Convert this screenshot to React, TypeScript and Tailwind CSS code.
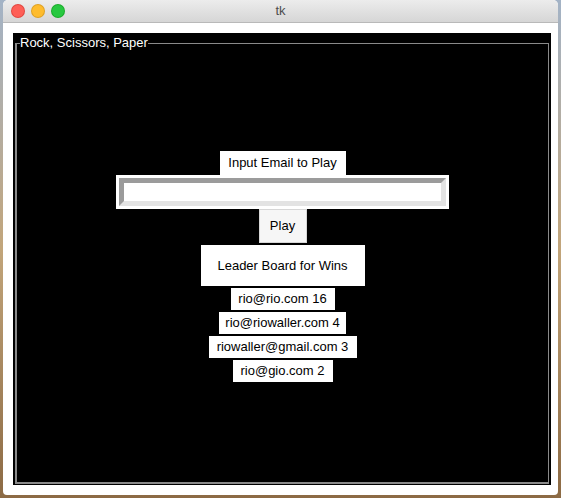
import React from "react";

const leaders = [
  { email: "rio@rio.com", wins: 16, w: "w-[104px]" },
  { email: "rio@riowaller.com", wins: 4, w: "w-[127px]" },
  { email: "riowaller@gmail.com", wins: 3, w: "w-[148px]" },
  { email: "rio@gio.com", wins: 2, w: "w-[100px]" },
];

function TitleBar() {
  return (
    <div className="grid h-[23px] grid-cols-[1fr_auto_1fr] items-center border-b border-[#b9b9b9] bg-gradient-to-b from-[#ececec] to-[#d6d6d6]">
      <div className="flex items-center gap-[8px] pl-[9px]">
        <span className="h-[12px] w-[12px] rounded-full bg-[#fe5f57] ring-1 ring-[#e2463f]" />
        <span className="h-[12px] w-[12px] rounded-full bg-[#febc2e] ring-1 ring-[#dfa123]" />
        <span className="h-[12px] w-[12px] rounded-full bg-[#28c840] ring-1 ring-[#1aab29]" />
      </div>
      <span className="text-[13px] text-[#4d4d4d]">tk</span>
      <div />
    </div>
  );
}

export default function App() {
  return (
    <div className="h-[498px] w-[561px] bg-gradient-to-b from-[#a3b3c6] via-[#c2a57a] to-[#8c6a44] px-[3px] pb-[3px] font-['Liberation_Sans',Arial,sans-serif]">
      <div className="flex h-[495px] w-[555px] flex-col overflow-hidden rounded-t-[5px] rounded-b-[4px] bg-white">
        <TitleBar />

        <div className="flex-1 pl-[10px] pr-[7px] pt-[10px] pb-[9px]">
          {/* black frame */}
          <div className="h-[452px] w-[538px] bg-black px-[2px] pt-[2px]">
            <fieldset className="h-[449px] border border-[#8a8a8a] border-b-2 border-l-2">
              <legend className="ml-[3px] text-[13px] leading-[16px] text-white">Rock, Scissors, Paper</legend>

              <div className="flex flex-col items-center pt-[100px] text-[13px] text-black">
                <div className="flex h-[24px] w-[126px] items-center justify-center bg-white">
                  Input Email to Play
                </div>

                <div className="h-[34px] w-[333px] bg-white p-[3px]">
                  <input
                    type="text"
                    className="h-[28px] w-[327px] border-[5px] border-t-[#9b9b9b] border-l-[#9b9b9b] border-b-[#e3e3e3] border-r-[#e3e3e3] bg-white px-1 outline-none"
                  />
                </div>

                <button className="flex h-[34px] w-[48px] items-center justify-center border border-[#d6d6d6] bg-[#f6f6f6] text-black">
                  Play
                </button>

                <div className="mt-[2px] flex h-[41px] w-[164px] items-center justify-center bg-white">
                  Leader Board for Wins
                </div>

                {leaders.map((row) => (
                  <div
                    key={row.email}
                    className={`mt-[2px] flex h-[22px] items-center justify-center bg-white ${row.w}`}
                  >
                    {row.email} {row.wins}
                  </div>
                ))}
              </div>
            </fieldset>
          </div>
        </div>
      </div>
    </div>
  );
}
